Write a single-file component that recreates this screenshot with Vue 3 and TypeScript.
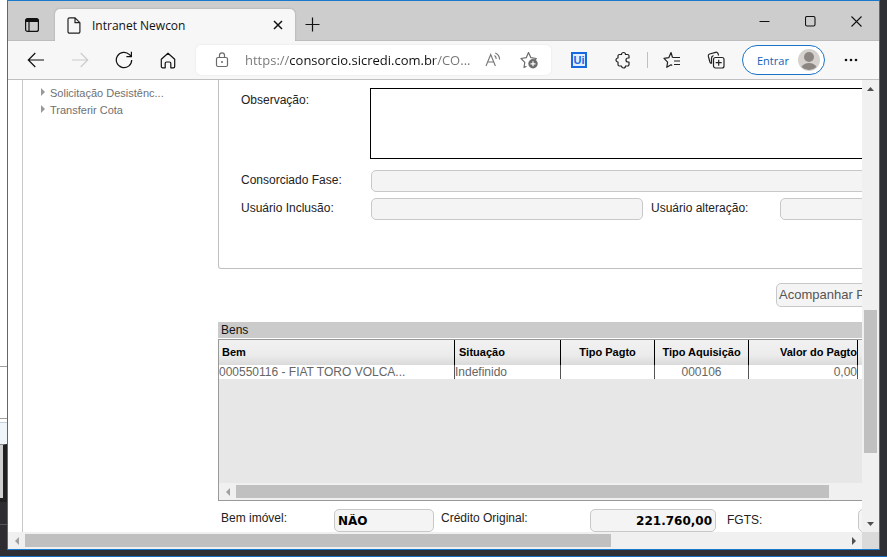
<script setup lang="ts">
interface Column {
  title: string
  value: string
  kind: string
}

const menuItems: string[] = ['Solicitação Desistênc...', 'Transferir Cota']

const columns: Column[] = [
  { title: 'Bem', value: '000550116 - FIAT TORO VOLCA...', kind: 'bem' },
  { title: 'Situação', value: 'Indefinido', kind: 'situacao' },
  { title: 'Tipo Pagto', value: '', kind: 'center' },
  { title: 'Tipo Aquisição', value: '000106', kind: 'center' },
  { title: 'Valor do Pagto', value: '0,00', kind: 'valor' },
]

// Scroll tracks: space before the thumb, the thumb, space after it
const track = (before: number, thumb: number, after: number): string =>
  `${before}fr ${thumb}fr ${after}fr`

const pageVertical = track(213, 143, 62)
const pageHorizontal = track(0, 586, 234)
const gridHorizontal = track(0, 593, 349)
</script>

<template>
  <div class="desktop">
    <div class="behind">
      <div class="behind-page"></div>
      <div class="behind-row"></div>
      <div class="behind-gap"></div>
      <div class="behind-tint"></div>
      <div class="behind-bar"></div>
      <div class="behind-dark"></div>
      <div class="behind-task"></div>
    </div>

    <div class="window">
      <header class="titlebar">
        <button class="tab-actions" aria-label="Guias">
          <svg width="16" height="16" viewBox="0 0 16 16">
            <rect x="1.6" y="1.6" width="12.8" height="12.8" rx="2" fill="none" stroke="#111" stroke-width="1.2" />
            <path d="M1.5 5V3.5a2 2 0 0 1 2-2h9a2 2 0 0 1 2 2V5z" fill="#111" />
            <path d="M5 5v9.5" stroke="#111" stroke-width="1.2" />
          </svg>
        </button>
        <div class="tab">
          <svg width="14" height="17" viewBox="0 0 14 17" fill="none" stroke="#222" stroke-width="1.2">
            <path d="M2.5 .8H8L12.9 5.7v9a1.5 1.5 0 0 1-1.5 1.5H2.5A1.5 1.5 0 0 1 1 14.700V2.300A1.500 1.500 0 0 1 2.500 .8zM8 .8v4.900h4.900" />
          </svg>
          <span class="tab-title">Intranet Newcon</span>
          <button class="tab-close" aria-label="Fechar guia">
            <svg width="10" height="10" viewBox="0 0 10 10" stroke="#111" stroke-width="1.5"><path d="M1 1l8 8M9 1L1 9" /></svg>
          </button>
        </div>
        <button class="new-tab" aria-label="Nova guia">
          <svg width="15" height="15" viewBox="0 0 15 15" stroke="#111" stroke-width="1.2"><path d="M.5 7.500h14M7.500 .5v14" /></svg>
        </button>
        <div class="caption">
          <button aria-label="Minimizar">
            <svg width="11" height="11" viewBox="0 0 11 11" stroke="#111"><path d="M.5 5.500h10" /></svg>
          </button>
          <button aria-label="Maximizar">
            <svg width="11" height="11" viewBox="0 0 11 11"><rect x=".5" y=".5" width="9.500" height="9.500" rx="1.500" fill="none" stroke="#111" stroke-width="1.100" /></svg>
          </button>
          <button aria-label="Fechar">
            <svg width="11" height="11" viewBox="0 0 11 11" stroke="#111" stroke-width="1.100"><path d="M.5 .5l10 10M10.500 .5l-10 10" /></svg>
          </button>
        </div>
      </header>

      <nav class="toolbar">
        <button class="tool" aria-label="Voltar">
          <svg width="18" height="16" viewBox="0 0 18 16" fill="none" stroke="#111" stroke-width="1.200"><path d="M17 8H1.500M8.300 1L1.300 8l7 7" /></svg>
        </button>
        <button class="tool" aria-label="Avançar" disabled>
          <svg width="18" height="16" viewBox="0 0 18 16" fill="none" stroke="#ccc" stroke-width="1.200"><path d="M1 8h15.500M9.700 1l7 7-7 7" /></svg>
        </button>
        <button class="tool" aria-label="Atualizar">
          <svg width="18" height="18" viewBox="0 0 18 18" fill="none" stroke="#111" stroke-width="1.200"><path d="M16.700 9A7.700 7.700 0 1 1 14.500 3.600L16.300 5.500M16.400 .8v4.900h-5" /></svg>
        </button>
        <button class="tool" aria-label="Início">
          <svg width="16" height="17" viewBox="0 0 16 17" fill="none" stroke="#111" stroke-width="1.200" stroke-linejoin="round"><path d="M1.300 7.300L8 1.200l6.700 6.100v7.200a1.300 1.300 0 0 1-1.300 1.300h-2.600v-4.500a1.300 1.300 0 0 0-1.300-1.300h-3a1.300 1.300 0 0 0-1.300 1.300v4.500H2.600a1.300 1.300 0 0 1-1.300-1.300z" /></svg>
        </button>

        <div class="address">
          <svg width="14" height="16" viewBox="0 0 14 16" fill="none" stroke="#6b6b6b" stroke-width="1.200">
            <rect x="1.500" y="5.500" width="11" height="9" rx="1.500" /><path d="M4.500 5.500V3.300a2.500 2.500 0 0 1 5 0v2.200" /><circle cx="7" cy="10" r="1" fill="#6b6b6b" stroke="none" />
          </svg>
          <input class="url" type="text" aria-label="Endereço" value="https://consorcio.sicredi.com.br/CO..." />
          <button aria-label="Ler em voz alta">
            <svg width="16" height="16" viewBox="0 0 16 16" fill="none" stroke="#757575" stroke-width="1.100"><path d="M1 14L5.700 2.500 10.400 14M2.600 10h6.200M9.500 3.500q1.700 1.100 1.700 3.500M10.300 .9q4.300 2 4.300 6.600" /></svg>
          </button>
          <button aria-label="Adicionar aos favoritos">
            <svg width="18" height="18" viewBox="0 0 18 18" fill="none">
              <path d="M6.500 15.200L4 16.500l.8-5.200L1 7.500l5.200-.8L8.500 1.500l2.400 5.200 5.400.8-1.500 1.500" stroke="#6b6b6b" stroke-width="1.200" stroke-linejoin="round" />
              <circle cx="13" cy="12.800" r="4.700" fill="#6b6b6b" /><path d="M10.500 12.800h5M13 10.300v5" stroke="#fff" stroke-width="1.200" />
            </svg>
          </button>
        </div>

        <button class="tool" aria-label="Extensão Ui"><span class="ui-logo">Ui</span></button>
        <button class="tool" aria-label="Extensões">
          <svg width="16" height="18" viewBox="0 0 16 18" fill="none" stroke="#222" stroke-width="1.200" stroke-linejoin="round"><path d="M4.500 3.500h2a2 2 0 0 1 4 0h2A1.500 1.500 0 0 1 14 5v2h-1a2 2 0 0 0 0 4h1v2.500a1.500 1.500 0 0 1-1.500 1.500h-2a2 2 0 0 1-4 0h-2A1.500 1.500 0 0 1 3 13.500V11a2 2 0 0 1 0-4V5a1.500 1.500 0 0 1 1.500-1.500z" /></svg>
        </button>
        <span class="divider"></span>
        <button class="tool" aria-label="Favoritos">
          <svg width="18" height="18" viewBox="0 0 18 18" fill="none" stroke="#222" stroke-width="1.200" stroke-linejoin="round"><path d="M9.500 6.500L8 1.500 5.800 6.700 1 7.400l3.600 3.700-.8 5.200 4.200-2.500 1.200.7M9.500 6.500H17M11 10h6M11 13.500h6" /></svg>
        </button>
        <button class="tool" aria-label="Coleções">
          <svg width="18" height="18" viewBox="0 0 18 18" fill="none" stroke="#222" stroke-width="1.200" stroke-linejoin="round"><path d="M4.500 12.500A2.500 2.500 0 0 1 2.900 11L1.300 5.200A2 2 0 0 1 2.600 3l6-1.700a2 2 0 0 1 2.500 1.500L11.600 4.500" /><rect x="6.500" y="6.500" width="10.500" height="10.500" rx="2" /><path d="M4.500 12.500V7.500a3 3 0 0 1 2-3M8.700 11.700h6M11.700 8.700v6" /></svg>
        </button>
        <button class="profile">
          Entrar
          <svg width="22" height="22" viewBox="0 0 22 22"><circle cx="11" cy="11" r="11" fill="#d5d2ce" /><circle cx="11" cy="8" r="5" fill="#8b8682" /><path d="M3.500 18q2.500-4 7.500-4t7.500 4a11 11 0 0 1-15 0z" fill="#8b8682" /></svg>
        </button>
        <button class="tool more" aria-label="Mais">
          <svg width="14" height="4" viewBox="0 0 14 4" fill="#111"><circle cx="2" cy="2" r="1.300" /><circle cx="7" cy="2" r="1.300" /><circle cx="12" cy="2" r="1.300" /></svg>
        </button>
      </nav>

      <div class="body">
        <div class="viewport">
          <div class="page">
            <aside class="menu">
              <a v-for="item in menuItems" :key="item" href="#">
                <svg width="4" height="8" viewBox="0 0 4 8"><path d="M0 0l4 4-4 4z" fill="#999" /></svg>{{ item }}
              </a>
            </aside>

            <main>
              <section class="panel">
                <div class="row note">
                  <label for="obs">Observação:</label>
                  <textarea id="obs"></textarea>
                </div>
                <div class="row">
                  <label for="fase">Consorciado Fase:</label>
                  <input id="fase" class="field" type="text" readonly />
                </div>
                <div class="row pair">
                  <label for="inclusao">Usuário Inclusão:</label>
                  <input id="inclusao" class="field" type="text" readonly />
                  <label class="second" for="alteracao">Usuário alteração:</label>
                  <input id="alteracao" class="field" type="text" readonly />
                </div>
              </section>

              <button class="follow">Acompanhar P</button>

              <h2>Bens</h2>
              <div class="grid">
                <table>
                  <colgroup>
                    <col class="w-bem" /><col class="w-sit" /><col class="w-tipo" /><col class="w-tipo" /><col class="w-valor" /><col />
                  </colgroup>
                  <thead>
                    <tr>
                      <th v-for="c in columns" :key="c.title" :class="c.kind">{{ c.title }}</th>
                      <th class="rest"></th>
                    </tr>
                  </thead>
                  <tbody>
                    <tr>
                      <td v-for="c in columns" :key="c.title" :class="c.kind">{{ c.value }}</td>
                      <td class="rest"></td>
                    </tr>
                  </tbody>
                </table>
                <div class="bar-h">
                  <button aria-label="Rolar para a esquerda"><svg width="4" height="8" viewBox="0 0 4 8"><path d="M4 0v8L0 4z" fill="#a0a0a0" /></svg></button>
                  <div class="track" :style="{ gridTemplateColumns: gridHorizontal }"><i class="thumb"></i></div>
                  <button aria-label="Rolar para a direita"><svg width="4" height="8" viewBox="0 0 4 8"><path d="M0 0v8l4-4z" fill="#505050" /></svg></button>
                </div>
              </div>

              <div class="totals">
                <label for="imovel">Bem imóvel:</label>
                <input id="imovel" class="field imovel" type="text" value="NÃO" readonly />
                <label class="credit" for="credito">Crédito Original:</label>
                <input id="credito" class="field credito" type="text" value="221.760,00" readonly />
                <label class="fgts-label" for="fgts">FGTS:</label>
                <input id="fgts" class="field fgts" type="text" readonly />
              </div>
            </main>
          </div>
        </div>

        <div class="bar-v">
          <button aria-label="Rolar para cima"><svg width="7" height="4" viewBox="0 0 7 4"><path d="M0 4h7L3.500 0z" fill="#505050" /></svg></button>
          <div class="track-v" :style="{ gridTemplateRows: pageVertical }"><i class="thumb-v"></i></div>
          <button aria-label="Rolar para baixo"><svg width="7" height="4" viewBox="0 0 7 4"><path d="M0 0h7L3.500 4z" fill="#505050" /></svg></button>
        </div>
        <div class="bar-h">
          <button aria-label="Rolar para a esquerda"><svg width="4" height="8" viewBox="0 0 4 8"><path d="M4 0v8L0 4z" fill="#a0a0a0" /></svg></button>
          <div class="track" :style="{ gridTemplateColumns: pageHorizontal }"><i class="thumb"></i></div>
          <button aria-label="Rolar para a direita"><svg width="4" height="8" viewBox="0 0 4 8"><path d="M0 0v8l4-4z" fill="#505050" /></svg></button>
        </div>
        <div class="corner"></div>
      </div>
    </div>
  </div>
</template>

<style>
body {
  margin: 0;
}
</style>

<style scoped>
* {
  box-sizing: border-box;
}
button {
  margin: 0;
  padding: 0;
  border: 0;
  background: none;
  font: inherit;
}
svg {
  display: block;
  flex: none;
}
.desktop {
  display: grid;
  grid-template-columns: 7px minmax(0, 1fr) 7px;
  grid-template-rows: minmax(0, 1fr) 6px;
  height: 100vh;
  background: #2e3035;
  border-bottom: 1px solid #1b6dbf;
  font-family: "Liberation Sans", Arial, sans-serif;
  font-size: 12px;
  color: #222;
}
.behind {
  display: flex;
  flex-direction: column;
}
.behind-page {
  flex: 1;
  background: #fff;
  border-bottom: 1px solid #a0a0a0;
}
.behind-row {
  height: 52px;
  background: #fff;
  border-bottom: 1px solid #a0a0a0;
}
.behind-gap {
  height: 4px;
  background: #fff;
  border-bottom: 1px solid #c5d3df;
}
.behind-tint {
  height: 21px;
  background: #eff5f9;
}
.behind-bar {
  height: 54px;
  background: #cfcfcf;
  border-top: 1px solid #888;
  border-right: 4px solid #202020;
}
.behind-dark {
  height: 4px;
  background: #202020;
}
.behind-task {
  height: 48px;
  background: linear-gradient(#2e2e32 22px, #55555a 22px, #55555a 23px, #2e2e32 23px);
}
.window {
  display: flex;
  flex-direction: column;
  border: 1px solid #1979ca;
  background: #fff;
  min-width: 0;
}

/* Title bar */
.titlebar {
  display: flex;
  align-items: flex-start;
  height: 40px;
  background: #cdcdcd;
  border-bottom: 1px solid #bdbdbd;
  font-family: "Open Sans", "Segoe UI", sans-serif;
}
.tab-actions {
  display: grid;
  place-items: center;
  width: 47px;
  height: 48px;
}
.tab {
  display: flex;
  align-items: center;
  width: 240px;
  height: 32px;
  padding: 0 12px;
  background: #f7f7f7;
  border-radius: 5px 5px 0 0;
  box-shadow: 0 0 2px #999;
  clip-path: inset(-3px -3px 0);
}
.tab,
.new-tab {
  margin-top: 8px;
}
.tab-title {
  flex: 1;
  padding-left: 11px;
  color: #111;
}
.new-tab {
  display: grid;
  place-items: center;
  width: 34px;
  height: 30px;
}
.caption {
  display: flex;
  margin-left: auto;
}
.caption button {
  display: grid;
  place-items: center;
  width: 46px;
  height: 40px;
}

/* Toolbar */
.toolbar {
  display: flex;
  align-items: center;
  height: 39px;
  padding: 0 6px;
  background: #f7f7f7;
  border-bottom: 1px solid #c0c0c0;
  font-family: "Open Sans", "Segoe UI", sans-serif;
}
.tool {
  display: grid;
  place-items: center;
  flex: none;
  width: 44px;
  height: 32px;
}
.address {
  display: flex;
  align-items: center;
  flex: 1;
  min-width: 0;
  height: 30px;
  margin: 0 6px;
  padding: 0 4px 0 19px;
  background: #fff;
  border-radius: 5px;
  box-shadow: 0 0 2px #e0e0e0;
}
.address button {
  display: grid;
  place-items: center;
  flex: none;
  width: 36px;
  height: 28px;
}
.url {
  flex: 1;
  min-width: 0;
  padding: 0;
  margin-left: 16px;
  border: 0;
  outline: 0;
  font: 13px "Open Sans", "Segoe UI", sans-serif;
  color: transparent;
  background: linear-gradient(90deg, #757575 45px, #111 45px, #111 189px, #757575 189px);
  background-clip: text;
}
.ui-logo {
  width: 16px;
  height: 16px;
  border: 2px solid #1769e0;
  background: #e3efff;
  color: #1769e0;
  font: bold 11px/12px "Liberation Sans", Arial, sans-serif;
  text-align: center;
}
.divider {
  width: 1px;
  height: 16px;
  margin: 0 2px;
  background: #c0c0c0;
}
.profile {
  display: flex;
  align-items: center;
  justify-content: space-between;
  flex: none;
  width: 83px;
  height: 30px;
  margin: 0 4px;
  padding: 0 4px 0 14px;
  border: 1px solid #1a73c7;
  border-radius: 15px;
  background: #fff;
  color: #0f62b5;
  font-size: 11px;
}

/* Page area and its scroll bars */
.body {
  display: grid;
  grid-template-columns: minmax(0, 1fr) 17px;
  grid-template-rows: minmax(0, 1fr) 17px;
  flex: 1;
  min-height: 0;
}
.viewport {
  overflow: hidden;
}
.page {
  display: flex;
  width: 140%;
  min-height: 100%;
  padding: 0 8px 0 14px;
}
.bar-v,
.bar-h {
  display: flex;
  background: #f0f0f0;
}
.bar-v {
  flex-direction: column;
}
.bar-v button,
.bar-h button {
  display: grid;
  place-items: center;
  flex: none;
  width: 17px;
  height: 17px;
}
.track,
.track-v {
  display: grid;
  flex: 1;
}
.track {
  padding: 2px 0;
}
.track-v {
  padding: 0 2px;
}
.thumb {
  grid-column: 2;
  background: #c0c0c0;
}
.thumb-v {
  grid-row: 2;
  background: #c0c0c0;
}
.corner {
  background: #dadada;
}

/* Side menu */
.menu {
  flex: none;
  width: 196px;
  padding: 4px 0 0 18px;
  border-left: 1px solid #c8c8c8;
}
.menu a {
  display: flex;
  align-items: center;
  gap: 5px;
  height: 17px;
  font-size: 11px;
  color: #707070;
  text-decoration: none;
}
.menu svg {
  margin-bottom: 2px;
}

/* Form */
main {
  flex: 1;
  min-width: 0;
}
.panel {
  display: grid;
  gap: 6px;
  padding: 8px 0 48px 22px;
  border: solid #c0c0c0;
  border-width: 0 1px 1px;
  border-radius: 0 0 3px 3px;
}
.row {
  display: grid;
  grid-template-columns: 130px minmax(0, 1fr);
  line-height: 20px;
}
.row.note {
  grid-template-columns: 129px minmax(0, 1fr);
  margin-bottom: 5px;
}
.note label {
  padding-top: 2px;
}
.row.pair {
  grid-template-columns: 130px 272px 137px minmax(0, 1fr);
}
.second {
  padding-left: 8px;
}
textarea {
  display: block;
  height: 71px;
  margin: 0;
  border: 1px solid #000;
  resize: none;
}
.field {
  min-width: 0;
  height: 22px;
  margin: 0;
  padding: 0 3px;
  border: 1px solid #c8c8c8;
  border-radius: 5px;
  background: #f4f4f4;
  color: #000;
  font: bold 12px "DejaVu Sans", Verdana, sans-serif;
}
.follow {
  display: block;
  width: 160px;
  height: 24px;
  margin: 14px 0 15px 558px;
  padding: 0 2px 2px;
  border: 1px solid #c8c8c8;
  border-radius: 5px;
  background: #f4f4f4;
  color: #555;
  font-size: 13px;
  text-align: left;
}
h2 {
  margin: 0 0 1px;
  padding-left: 3px;
  background: #cbcbcb;
  color: #111;
  font-size: 12px;
  font-weight: normal;
  line-height: 16px;
}
.grid {
  display: flex;
  flex-direction: column;
  justify-content: space-between;
  height: 162px;
  border: 1px solid #999;
  background: #e7e7e7;
}
table {
  width: 100%;
  table-layout: fixed;
  border-collapse: separate;
  border-spacing: 0;
}
.w-bem {
  width: 236px;
}
.w-sit {
  width: 106px;
}
.w-tipo {
  width: 94px;
}
.w-valor {
  width: 109px;
}
th,
td {
  padding: 0;
  border-right: 1px solid #555;
  text-align: left;
  white-space: nowrap;
}
th {
  height: 25px;
  padding-bottom: 2px;
  border-color: #000;
  font-size: 11px;
  color: #000;
}
thead tr {
  background: linear-gradient(#f1f1f1, #ececec 60%, #dadada);
}
td {
  height: 14px;
  line-height: 14px;
  color: #666;
  background: #fff;
}
th.bem {
  padding-left: 3px;
}
th.situacao {
  padding-left: 4px;
}
.center {
  text-align: center;
}
.valor {
  text-align: right;
}
.rest {
  border-right: 0;
}
.totals {
  display: flex;
  padding: 8px 0 0 3px;
  line-height: 18px;
}
.totals label {
  flex: none;
  width: 113px;
}
.totals .field {
  height: 23px;
}
.imovel {
  width: 100px;
}
.totals .credit {
  width: 156px;
  padding-left: 7px;
}
.credito {
  width: 126px;
  text-align: right;
}
.totals .fgts-label {
  width: 142px;
  padding-left: 11px;
  line-height: 23px;
}
.fgts {
  width: 126px;
}
</style>
